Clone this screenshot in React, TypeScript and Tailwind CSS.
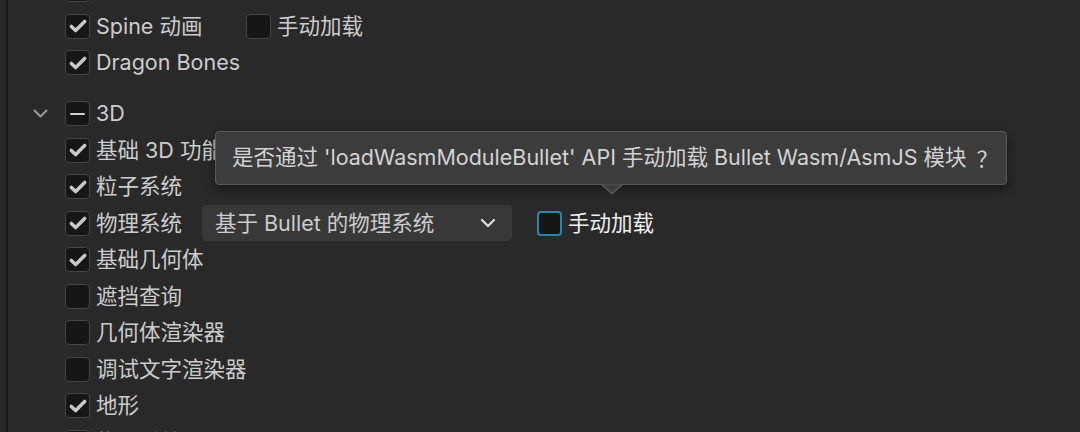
import React from "react";

type Mark = "on" | "off" | "mixed";

function Box({ mark, focus = false }: { mark: Mark; focus?: boolean }) {
  return (
    <span
      className={`flex h-[25px] w-[25px] shrink-0 items-center justify-center rounded-[4px] bg-[#161616] ${
        focus ? "border-2 border-[#2786ad]" : "border-[1.5px] border-[#454545]"
      }`}
    >
      {mark === "on" && (
        <svg width="20" height="20" viewBox="0 0 24 24" fill="none">
          <path d="M4 12.5l5.2 5L20 6.5" stroke="#c9c9c9" strokeWidth="4.2" strokeLinecap="round" strokeLinejoin="round" />
        </svg>
      )}
      {mark === "mixed" && <span className="h-[2px] w-[15px] rounded bg-[#cfcfcf]" />}
    </span>
  );
}

function Row({ mark, label, caret = false, className = "", children }: { mark: Mark; label: string; caret?: boolean; className?: string; children?: React.ReactNode }) {
  return (
    <div className={`flex h-[36.5px] shrink-0 items-center ${className}`}>
      <div className="flex w-[40px] shrink-0 items-center pl-[8px]">
        {caret && (
          <svg width="15" height="9" viewBox="0 0 15 9" fill="none">
            <path d="M1.5 1.5l6 6 6-6" stroke="#9a9a9a" strokeWidth="2" strokeLinecap="round" strokeLinejoin="round" />
          </svg>
        )}
      </div>
      <Box mark={mark} />
      {children ? (
        children
      ) : (
        <span className="ml-[6px] whitespace-nowrap text-[#cccccc]">{label}</span>
      )}
    </div>
  );
}

export default function App() {
  return (
    <div
      className="relative flex h-[432px] w-[1080px] overflow-hidden bg-[#292929] text-[21.5px] leading-none"
      style={{ fontFamily: 'Inter, "Noto Sans CJK SC", sans-serif' }}
    >
      <div className="w-[6px] shrink-0" />
      <div className="w-[2px] shrink-0 bg-[#1a1a1a]" />
      <div className="flex flex-1 flex-col pl-[17px] -mt-[28.5px]">
        <Row mark="on" label="" />
        <Row mark="on" label="">
          <span className="ml-[6px] w-[150px] whitespace-nowrap text-[#cccccc]">Spine 动画</span>
          <Box mark="off" />
          <span className="ml-[6px] whitespace-nowrap text-[#cccccc]">手动加载</span>
        </Row>
        <Row mark="on" label="Dragon Bones" />
        <Row mark="mixed" label="3D" caret className="mt-[14.5px]" />
        <Row mark="on" label="基础 3D 功能" />
        <Row mark="on" label="粒子系统" />
        <Row mark="on" label="">
          <span className="ml-[6px] w-[106px] whitespace-nowrap text-[#cccccc]">物理系统</span>
          <div className="flex h-[36px] w-[310px] items-center justify-between rounded-[4px] bg-[#383838] pl-[13px] pr-[16px]">
            <span className="whitespace-nowrap text-[#cccccc]">基于 Bullet 的物理系统</span>
            <svg width="16" height="10" viewBox="0 0 16 10" fill="none">
              <path d="M2 2l6 6 6-6" stroke="#e0e0e0" strokeWidth="2.2" strokeLinecap="round" strokeLinejoin="round" />
            </svg>
          </div>
          <div className="ml-[25px] flex items-center">
            <Box mark="off" focus />
            <span className="ml-[6px] whitespace-nowrap text-[#f0f0f0]">手动加载</span>
          </div>
        </Row>
        <Row mark="on" label="基础几何体" />
        <Row mark="off" label="遮挡查询" />
        <Row mark="off" label="几何体渲染器" />
        <Row mark="off" label="调试文字渲染器" />
        <Row mark="on" label="地形" />
        <Row mark="off" label="物理系统" />
      </div>

      {/* tooltip */}
      <div className="absolute left-[215px] top-[131px] h-[54px] w-[792px] rounded-[4px] border-[1.5px] border-[#5a5a5a] bg-[#3c3c3c] shadow-[0_4px_10px_rgba(0,0,0,0.45)]">
        <div className="flex h-full items-center whitespace-nowrap pl-[16px] text-[#d2d2d2]">
          是否通过 'loadWasmModuleBullet' API 手动加载 Bullet Wasm/AsmJS 模块
          <span className="ml-[10px]" style={{ fontFamily: '"Noto Sans CJK SC", sans-serif' }}>？</span>
        </div>
        <svg className="absolute left-[385px] top-[51px]" width="22" height="12" viewBox="0 0 22 12">
          <path d="M0 1.5 L11 11 L22 1.5 Z" fill="#3c3c3c" />
          <path d="M0.5 1.5 L11 10.5 L21.5 1.5" fill="none" stroke="#5a5a5a" strokeWidth="1.5" />
        </svg>
      </div>
    </div>
  );
}
